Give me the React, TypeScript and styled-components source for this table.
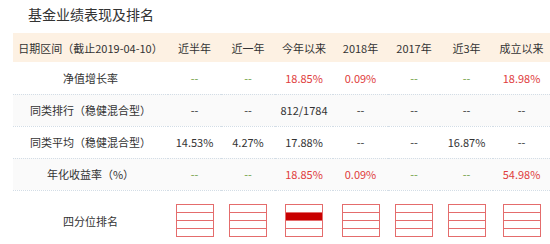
import React from 'react';
import styled, { createGlobalStyle } from 'styled-components';

const GlobalStyle = createGlobalStyle`
  body {
    margin: 0;
    background: #fff;
    font-family: "Noto Sans CJK SC", "Noto Sans", sans-serif;
    color: #333;
  }
`;

const Wrapper = styled.div`
  width: 550px;
  padding-left: 13px;
  box-sizing: border-box;
`;

const Title = styled.h2`
  margin: 0;
  height: 33px;
  padding-left: 15px;
  font-size: 14px;
  font-weight: 400;
  line-height: 29px;
  color: #333;
`;

const Table = styled.table`
  width: 537px;
  border-collapse: collapse;
  table-layout: fixed;
  font-size: 11px;
`;

const HeadRow = styled.tr`
  height: 29px;
  background: #fdf1e3;
`;

const HeadCell = styled.th`
  font-weight: 400;
  text-align: center;
  color: #333;
  padding: 0;
  white-space: nowrap;
`;

const Row = styled.tr<{ $shaded?: boolean }>`
  height: 32px;
  background: ${(p) => (p.$shaded ? '#fafafa' : '#fff')};
  border-bottom: 1px dotted #d3dde6;
`;

const Cell = styled.td<{ $tone?: 'red' | 'green' | 'plain' }>`
  text-align: center;
  padding: 0;
  white-space: nowrap;
  color: ${(p) => (p.$tone === 'red' ? '#e03c3c' : p.$tone === 'green' ? '#6f9f45' : '#333')};
`;

const LabelCell = styled.td`
  text-align: center;
  padding: 0;
  color: #333;
  white-space: nowrap;
`;

const QuartileCell = styled.td`
  padding: 13px 0 14px;
  vertical-align: middle;
`;

const Box = styled.div`
  width: 38px;
  height: 33px;
  margin: 0 auto;
  box-sizing: border-box;
  padding: 1px;
  background: #e46c6c;
  display: grid;
  grid-template-rows: repeat(4, 7px);
  row-gap: 1px;
`;

const Segment = styled.div<{ $filled?: boolean }>`
  background: ${(p) => (p.$filled ? '#c80000' : '#fff')};
`;

type Value = string;

const tone = (v: Value, color: boolean): 'red' | 'green' | 'plain' => {
  if (!color) return 'plain';
  if (v === '--') return 'green';
  return 'red';
};

const headers = ['近半年', '近一年', '今年以来', '2018年', '2017年', '近3年', '成立以来'];

const rows: { label: string; values: Value[]; colored: boolean }[] = [
  { label: '净值增长率', values: ['--', '--', '18.85%', '0.09%', '--', '--', '18.98%'], colored: true },
  { label: '同类排行（稳健混合型）', values: ['--', '--', '812/1784', '--', '--', '--', '--'], colored: false },
  { label: '同类平均（稳健混合型）', values: ['14.53%', '4.27%', '17.88%', '--', '--', '16.87%', '--'], colored: false },
  { label: '年化收益率（%）', values: ['--', '--', '18.85%', '0.09%', '--', '--', '54.98%'], colored: true },
];

// which segment (0-3) is filled per column, -1 for none
const quartiles = [-1, -1, 1, -1, -1, -1, -1];

const widths = [155, 53, 54, 58, 55, 52, 53, 57];

const App: React.FC = () => {
  return (
    <Wrapper>
      <GlobalStyle />
      <Title>基金业绩表现及排名</Title>
      <Table>
        <colgroup>
          {widths.map((w, i) => (
            <col key={i} style={{ width: w }} />
          ))}
        </colgroup>
        <thead>
          <HeadRow>
            <HeadCell>日期区间（截止2019-04-10）</HeadCell>
            {headers.map((h) => (
              <HeadCell key={h}>{h}</HeadCell>
            ))}
          </HeadRow>
        </thead>
        <tbody>
          {rows.map((r, i) => (
            <Row key={r.label} $shaded={i % 2 === 1}>
              <LabelCell>{r.label}</LabelCell>
              {r.values.map((v, j) => (
                <Cell key={j} $tone={tone(v, r.colored)}>
                  {v}
                </Cell>
              ))}
            </Row>
          ))}
          <tr>
            <LabelCell>四分位排名</LabelCell>
            {quartiles.map((q, j) => (
              <QuartileCell key={j}>
                <Box>
                  {[0, 1, 2, 3].map((s) => (
                    <Segment key={s} $filled={s === q} />
                  ))}
                </Box>
              </QuartileCell>
            ))}
          </tr>
        </tbody>
      </Table>
    </Wrapper>
  );
};

export default App;
